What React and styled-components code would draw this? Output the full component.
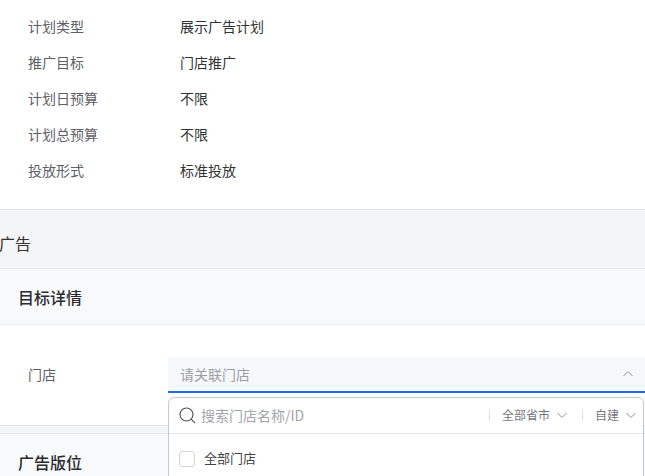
import React from "react";
import styled, { createGlobalStyle } from "styled-components";

const GlobalStyle = createGlobalStyle`
  html, body {
    margin: 0;
    padding: 0;
    background: #fff;
    overflow: hidden;
  }
  body {
    font-family: "Noto Sans CJK SC", "Liberation Sans", sans-serif;
  }
`;

const Page = styled.div`
  position: relative;
  width: 645px;
  height: 476px;
  overflow: hidden;
`;

const InfoList = styled.div`
  display: flex;
  flex-direction: column;
  height: 209px;
  padding: 8px 0 0 28px;
  box-sizing: border-box;
`;

const InfoRow = styled.div`
  display: flex;
  align-items: center;
  height: 36px;
  font-size: 14px;
`;

const InfoLabel = styled.div`
  width: 152px;
  color: #5e6066;
`;

const InfoValue = styled.div`
  color: #333;
`;

const AdBand = styled.div`
  display: flex;
  align-items: center;
  height: 50px;
  padding-top: 8px;
  background: #f4f5f7;
  border-top: 1px solid #e6e7ea;
  border-bottom: 1px solid #e6e7ea;
`;

const AdTitle = styled.div`
  margin-left: -1px;
  font-size: 16px;
  color: #333;
`;

const SectionHead = styled.div`
  display: flex;
  align-items: center;
  height: ${(p) => p.$height}px;
  padding-left: 18px;
  background: #f8f9fb;
  border-bottom: 1px solid #eceef1;
  font-size: 16px;
  font-weight: 500;
  color: #2b2b2f;
`;

const FormArea = styled.div`
  display: flex;
  align-items: flex-start;
  height: 100px;
  padding: 32px 0 0 28px;
  box-sizing: border-box;
`;

const FieldLabel = styled.div`
  width: 140px;
  height: 36px;
  line-height: 34px;
  font-size: 14px;
  color: #5e6066;
`;

const Selector = styled.div`
  display: flex;
  flex: 1;
  align-items: center;
  justify-content: space-between;
  height: 36px;
  padding: 0 11px 0 12px;
  box-sizing: border-box;
  background: #f7f8fc;
  border-bottom: 2px solid #2468e8;
  font-size: 14px;
  color: #9b9da3;
`;

const Gap = styled.div`
  height: 7px;
  background: #f4f5f7;
  border-top: 1px solid #e6e7ea;
  border-bottom: 1px solid #e6e7ea;
`;

const Dropdown = styled.div`
  position: absolute;
  left: 168px;
  top: 397px;
  width: 476px;
  height: 90px;
  box-sizing: border-box;
  background: #fff;
  border: 1px solid #c8c9cd;
  border-radius: 6px;
`;

const SearchBar = styled.div`
  display: flex;
  align-items: center;
  height: 35px;
  padding: 0 5px 0 10px;
  border-bottom: 1px solid #e6e7ea;
`;

const SearchText = styled.div`
  flex: 1;
  margin: -2px 0 0 5px;
  font-size: 14px;
  color: #a3a5aa;
`;

const FilterSep = styled.div`
  width: 1px;
  height: 12px;
  margin-top: -2px;
  background: #dfe0e3;
`;

const Filter = styled.div`
  display: flex;
  align-items: center;
  gap: 6px;
  margin-top: -2px;
  padding: 0 ${(p) => p.$pad}px 0 12px;
  font-size: 12px;
  color: #77797f;
`;

const OptionRow = styled.div`
  display: flex;
  align-items: center;
  height: 50px;
  padding-left: 10px;
  font-size: 13px;
  color: #444;
`;

const CheckBox = styled.span`
  width: 14px;
  height: 14px;
  margin-right: 9px;
  background: #fff;
  border: 1px solid #d4d5d9;
  border-radius: 3px;
`;

const OptionText = styled.span`
  margin-top: -3px;
`;

const info = [
  ["计划类型", "展示广告计划"],
  ["推广目标", "门店推广"],
  ["计划日预算", "不限"],
  ["计划总预算", "不限"],
  ["投放形式", "标准投放"],
];

function Chevron({ up, color = "#8f9197", size = 12 }) {
  return (
    <svg width={size} height={size} viewBox="0 0 12 12" fill="none">
      <path
        d={up ? "M1.5 8 L6 3.5 L10.5 8" : "M1.5 4 L6 8.5 L10.5 4"}
        stroke={color}
        strokeWidth="1"
      />
    </svg>
  );
}

function SearchIcon() {
  return (
    <svg width="17" height="17" viewBox="0 0 17 17" fill="none">
      <circle cx="7.5" cy="7.5" r="6.5" stroke="#55575c" strokeWidth="1.2" />
      <path d="M12.2 12.2 L16 16" stroke="#55575c" strokeWidth="1.2" />
    </svg>
  );
}

export default function App() {
  return (
    <Page>
      <GlobalStyle />
      <InfoList>
        {info.map(([label, value]) => (
          <InfoRow key={label}>
            <InfoLabel>{label}</InfoLabel>
            <InfoValue>{value}</InfoValue>
          </InfoRow>
        ))}
      </InfoList>
      <AdBand>
        <AdTitle>广告</AdTitle>
      </AdBand>
      <SectionHead $height={55}>目标详情</SectionHead>
      <FormArea>
        <FieldLabel>门店</FieldLabel>
        <Selector>
          请关联门店
          <Chevron up />
        </Selector>
      </FormArea>
      <Gap />
      <SectionHead $height={56}>广告版位</SectionHead>
      <Dropdown>
        <SearchBar>
          <SearchIcon />
          <SearchText>搜索门店名称/ID</SearchText>
          <FilterSep />
          <Filter $pad={14}>
            全部省市
            <Chevron />
          </Filter>
          <FilterSep />
          <Filter $pad={1}>
            自建
            <Chevron />
          </Filter>
        </SearchBar>
        <OptionRow>
          <CheckBox />
          <OptionText>全部门店</OptionText>
        </OptionRow>
      </Dropdown>
    </Page>
  );
}
